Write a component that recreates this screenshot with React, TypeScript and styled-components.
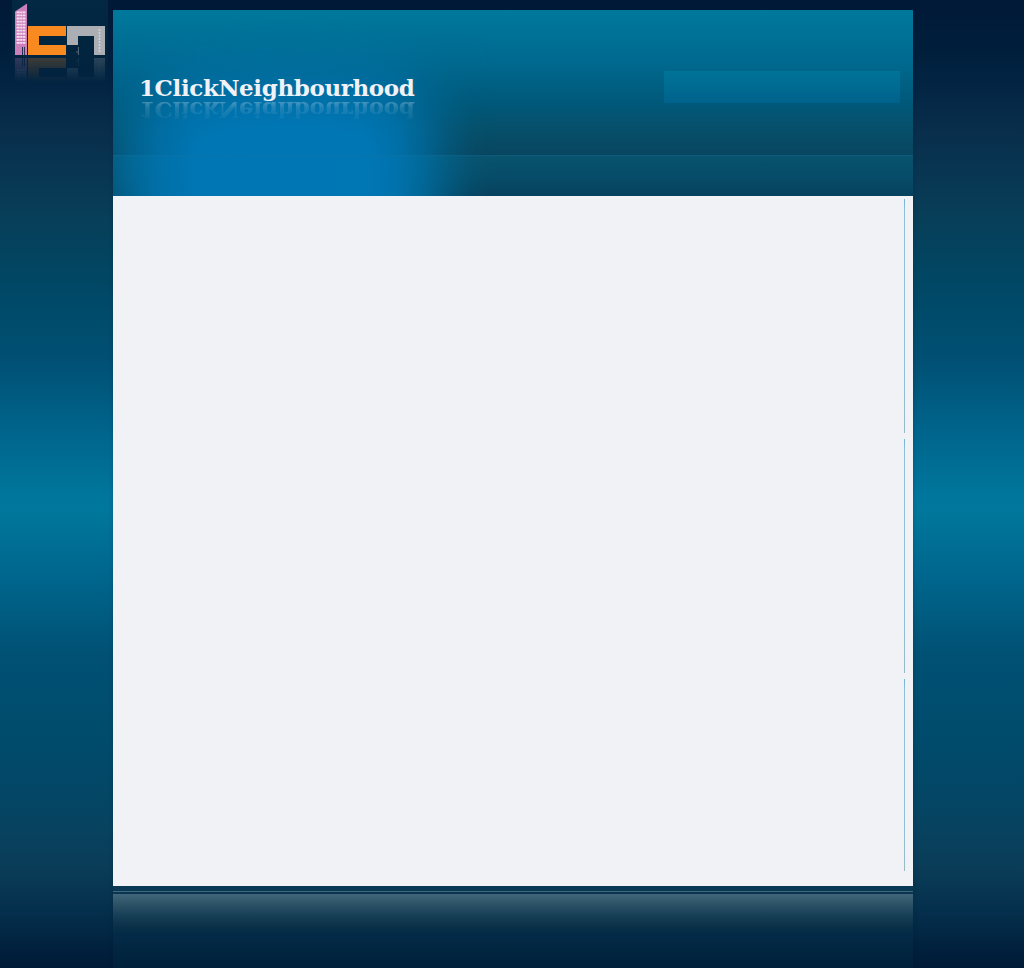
import React from 'react';
import styled, { createGlobalStyle } from 'styled-components';

const GlobalStyle = createGlobalStyle`
  html, body { margin: 0; padding: 0; }
  body { background: #001a36; overflow: hidden; }
`;

const Page = styled.div`
  box-sizing: border-box;
  width: 1024px;
  height: 968px;
  padding-top: 10px;
  display: flex;
  overflow: hidden;
  background: linear-gradient(
    to bottom,
    #001937 0, #00203e 60px, #082e4c 130px, #083e58 215px, #004764 280px,
    #005074 360px, #00648b 430px, #00769c 495px, #00779c 510px, #00658c 580px,
    #005174 655px, #004b6c 740px, #054563 810px, #0a3c57 870px, #042e4b 915px,
    #001e3b 955px, #001b38 968px
  );
`;

const LogoColumn = styled.div`
  flex: 0 0 113px;
  height: 90px;
  margin-top: -10px;
  padding-left: 12px;
  box-sizing: border-box;
`;

const LogoSvg = styled.svg`
  display: block;
`;

const Main = styled.div`
  width: 800px;
  flex: none;
  display: flex;
  flex-direction: column;
  box-shadow: 0 0 4px rgba(0, 22, 48, 0.25);
`;

const glow = `
  linear-gradient(to right,
    rgba(0, 109, 158, 0.5) 0, rgba(0, 112, 165, 0.72) 18px, rgba(0, 115, 173, 0.92) 45px,
    rgba(0, 119, 181, 0.99) 85px, #0077b5 250px, rgba(0, 117, 177, 0.94) 282px,
    rgba(0, 112, 166, 0.8) 308px, rgba(0, 106, 154, 0.45) 336px,
    rgba(0, 102, 146, 0.14) 358px, rgba(0, 100, 145, 0) 378px)
`;

const Header = styled.header`
  position: relative;
  height: 145px;
  flex: none;
  box-sizing: border-box;
  padding: 61px 13px 0 26px;
  display: flex;
  justify-content: space-between;
  align-items: flex-start;
  background: linear-gradient(to bottom, #00799d 0, #00698f 52px, #00597a 92px, #06506b 117px, #084660 145px);

  &::before {
    content: '';
    position: absolute;
    inset: 0;
    background: ${glow};
    mask-image: radial-gradient(ellipse 440px 135px at 172px 145px,
      #000 20%, rgba(0, 0, 0, 0.88) 35%, rgba(0, 0, 0, 0.65) 50%, rgba(0, 0, 0, 0.3) 70%, transparent 100%);
  }
`;

const Brand = styled.div`
  position: relative;
  width: 300px;
`;

const Title = styled.h1<{ $mirrored?: boolean }>`
  margin: 0;
  height: 33px;
  font: bold 23px/33px 'DejaVu Serif', serif;
  letter-spacing: -0.38px;
  white-space: nowrap;
  color: #f0f2f7;
  ${({ $mirrored }) =>
    $mirrored &&
    `
    transform: scaleY(-1);
    margin-top: -10px;
    opacity: 0.28;
    mask-image: linear-gradient(to top, transparent 8px, #000 8px, rgba(0,0,0,.45) 14px, rgba(0,0,0,.2) 23px, transparent 29px);
  `}
`;

const SearchPanel = styled.div`
  width: 236px;
  height: 32px;
  background: linear-gradient(to bottom, #007398, #006b92 50%, #00628c);
`;

const MenuBar = styled.nav`
  height: 41px;
  flex: none;
  background:
    linear-gradient(to bottom, rgba(32, 112, 150, 0.25), transparent 2px),
    ${glow},
    linear-gradient(to bottom, #08536e, #064c68 22px, #07425f);
`;

const Content = styled.main`
  height: 690px;
  flex: none;
  box-sizing: border-box;
  padding: 3px 8px 15px 0;
  display: flex;
  flex-direction: column;
  align-items: flex-end;
  gap: 6px;
  background: #f0f2f6;
`;

const Rule = styled.div<{ $height: number }>`
  width: 1px;
  height: ${({ $height }) => $height}px;
  background: linear-gradient(to bottom, #72b7d2, #91bfdd 12px, #91bfdd 70%, #98b9c5);
`;

const Divider = styled.div`
  height: 8px;
  flex: none;
  background: linear-gradient(to bottom, #0a3955 5px, #45677b 5px, #45677b 6px, #093551 6px);
`;

const Footer = styled.footer`
  height: 74px;
  flex: none;
  background: linear-gradient(to bottom, #416679 0, #2d5367 10px, #173f56 21px, #0a3048 33px, #032b48 40px, #02253f 58px, #00213b 74px);
`;

const Fill = styled.div`
  flex: 1;
`;

const rows = Array.from({ length: 11 }, (_, i) => 11.5 + i * 3.05);

function LogoShapes() {
  return (
    <>
      <path d="M3 11.5 15 3.5V55H3Z" fill="#cc80bb" />
      {rows.map((y) => (
        <path key={y} d={`M4.6 ${y}h3.2v1.8H4.6zM8.2 ${y}h2v1.8h-2zM10.7 ${y}h2.7v1.8h-2.7z`} fill="#f5dff0" />
      ))}
      <path d="M10 47h1v8h-1zM12 47h.9v8H12z" fill="#252f50" />
      <path d="M16 26H54V36H27V45H54V55H16Z" fill="#f98a20" />
      <path d="M55 26H93V55H82V36H66V45H55Z" fill="#abafb3" />
      <path d="M66.4 47v8M65 51v2" stroke="#53697b" strokeWidth="1" />
      <path d="M87.5 29v24" stroke="#d1d4d6" strokeWidth="1.5" strokeDasharray="2 1" />
    </>
  );
}

function Logo() {
  return (
    <LogoSvg width="96" height="84" viewBox="0 0 96 84" role="img" aria-label="1CN">
      <defs>
        <linearGradient id="panel" x1="0" y1="0" x2="0" y2="1">
          <stop offset="0" stopColor="#022844" />
          <stop offset=".7" stopColor="#02243e" />
          <stop offset="1" stopColor="#032440" stopOpacity="0" />
        </linearGradient>
        <linearGradient id="fade" gradientUnits="userSpaceOnUse" x1="0" y1="58" x2="0" y2="82">
          <stop offset="0" stopColor="#fff" stopOpacity=".24" />
          <stop offset="1" stopColor="#fff" stopOpacity="0" />
        </linearGradient>
        <mask id="reflection" maskUnits="userSpaceOnUse" x="0" y="58" width="96" height="26">
          <rect y="58" width="96" height="26" fill="url(#fade)" />
        </mask>
      </defs>
      <rect width="96" height="84" fill="url(#panel)" />
      <LogoShapes />
      <g mask="url(#reflection)">
        <g transform="translate(0 113) scale(1 -1)">
          <LogoShapes />
        </g>
      </g>
    </LogoSvg>
  );
}

export default function App() {
  return (
    <>
      <GlobalStyle />
      <Page>
        <LogoColumn>
          <Logo />
        </LogoColumn>
        <Main>
          <Header>
            <Brand>
              <Title>1ClickNeighbourhood</Title>
              <Title as="div" $mirrored aria-hidden="true">1ClickNeighbourhood</Title>
            </Brand>
            <SearchPanel />
          </Header>
          <MenuBar />
          <Content>
            <Rule $height={234} />
            <Rule $height={234} />
            <Rule $height={192} />
          </Content>
          <Divider />
          <Footer />
        </Main>
        <Fill />
      </Page>
    </>
  );
}
